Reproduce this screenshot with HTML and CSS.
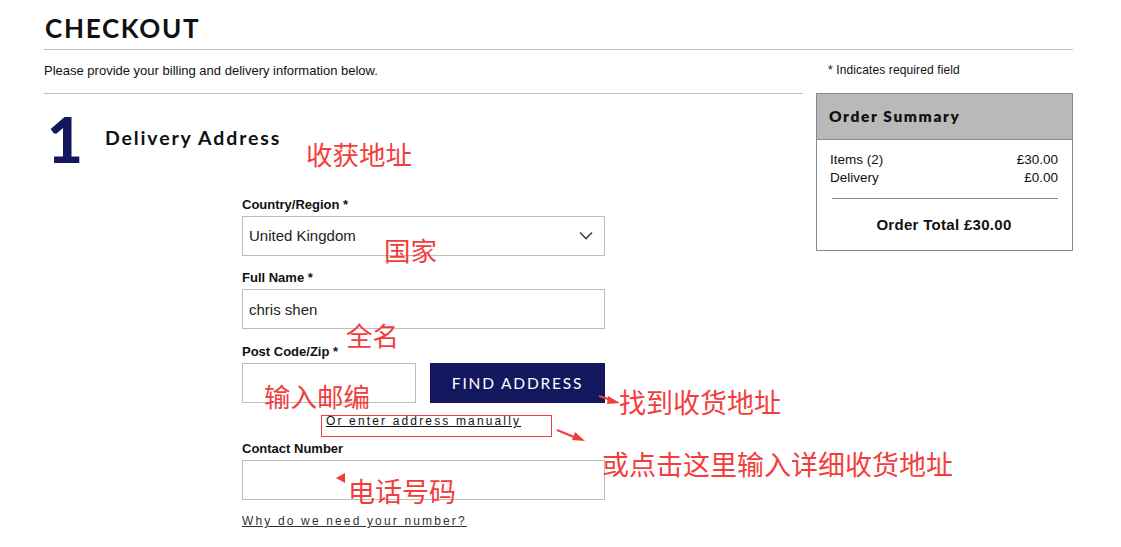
FILE: index.html
```html
<!DOCTYPE html>
<html lang="en">
<head>
<meta charset="utf-8">
<title>Checkout</title>
<link rel="stylesheet" href="styles.css">
</head>
<body>
<div class="page">
  <h1 class="page-title">CHECKOUT</h1>
  <div class="layout">
    <main class="main-col">
      <p class="intro">Please provide your billing and delivery information below.</p>
      <section class="step">
        <div class="step-head">
          <span class="step-num">1</span>
          <h2 class="step-title">Delivery Address</h2>
        </div>
        <form class="form">
          <div class="field">
            <label class="label">Country/Region *</label>
            <div class="select">
              <span>United Kingdom</span>
              <svg class="chev" width="14" height="9" viewBox="0 0 14 9"><path d="M1 1.5 L7 7.5 L13 1.5" fill="none" stroke="#444" stroke-width="1.6"/></svg>
            </div>
          </div>
          <div class="field field-name">
            <label class="label">Full Name *</label>
            <div class="input">chris shen</div>
          </div>
          <div class="field">
            <label class="label">Post Code/Zip *</label>
            <div class="post-row">
              <div class="input post"></div>
              <button type="button" class="btn">FIND ADDRESS</button>
            </div>
          </div>
          <div class="manual-row"><a class="link" href="#">Or enter address manually</a></div>
          <div class="field field-tight">
            <label class="label">Contact Number</label>
            <div class="input"></div>
          </div>
          <div class="why-row"><a class="link why" href="#">Why do we need your number?</a></div>
        </form>
      </section>
    </main>
    <aside class="side-col">
      <p class="required">* Indicates required field</p>
      <div class="summary">
        <div class="summary-head">Order Summary</div>
        <div class="summary-body">
          <div class="summary-row"><span>Items (2)</span><span>£30.00</span></div>
          <div class="summary-row"><span>Delivery</span><span>£0.00</span></div>
          <hr class="summary-rule">
          <div class="summary-total">Order Total £30.00</div>
        </div>
      </div>
    </aside>
  </div>

  <div class="note n-addr">收获地址</div>
  <div class="note n-country">国家</div>
  <div class="note n-name">全名</div>
  <div class="note n-post">输入邮编</div>
  <div class="note n-find">找到收货地址</div>
  <div class="note n-manual">或点击这里输入详细收货地址</div>
  <div class="note n-phone">电话号码</div>
  <div class="note-box"></div>
  <svg class="arrows" width="1121" height="547" viewBox="0 0 1121 547">
    <path d="M599 396 L611 400" stroke="#f33d3d" stroke-width="2.2" fill="none"/>
    <path d="M620 403 L608 396 L607 404 Z" fill="#f33d3d"/>
    <path d="M557 430 L574 437" stroke="#f33d3d" stroke-width="2.2" fill="none"/>
    <path d="M585 441 L575 432 L572 440 Z" fill="#f33d3d"/>
    <path d="M336 478 L345 473 L345 483 Z" fill="#f33d3d"/>
  </svg>
</div>
</body>
</html>
```

FILE: styles.css
```css
* { box-sizing: border-box; }
html, body { margin: 0; padding: 0; background: #fff; }
body {
  font-family: "Liberation Sans", Arial, sans-serif;
  color: #111;
  width: 1121px;
  height: 547px;
  overflow: hidden;
}
.page {
  position: relative;
  width: 1121px;
  height: 547px;
  padding-left: 44px;
}
.page-title {
  margin: 0;
  width: 1029px;
  padding-top: 13px;
  height: 50px;
  font-family: Lato, sans-serif;
  font-weight: 700;
  font-size: 26px;
  line-height: 30px;
  letter-spacing: 1.7px;
  color: #111;
  border-bottom: 1px solid #bdbdbd;
  padding-left: 1px;
}
.layout {
  display: flex;
  gap: 13px;
  width: 1029px;
}
.main-col { width: 759px; }
.intro {
  margin: 0;
  padding: 13px 0 14px;
  font-size: 13px;
  line-height: 16px;
  border-bottom: 1px solid #bdbdbd;
}
.step-head {
  display: flex;
  padding-top: 14px;
  height: 102px;
  align-items: flex-start;
}
.step-num {
  font-family: Lato, sans-serif;
  font-weight: 900;
  font-size: 62px;
  line-height: 62px;
  color: #12175e;
  width: 61px;
  padding-left: 3px;
}
.step-title {
  margin: 18px 0 0;
  font-family: Lato, sans-serif;
  font-weight: 700;
  font-size: 19.5px;
  line-height: 24px;
  letter-spacing: 1.85px;
  color: #111;
}
.form {
  margin-left: 198px;
  width: 363px;
  display: flex;
  flex-direction: column;
}
.field { display: flex; flex-direction: column; margin-bottom: 13px; }
.field-name { margin-bottom: 14px; }
.field-tight { margin-bottom: 0; }
.label {
  font-size: 13px;
  font-weight: 700;
  line-height: 16px;
  margin-top: 1px;
  margin-bottom: 3px;
  color: #111;
}
.select, .input {
  height: 40px;
  border: 1px solid #bdbdbd;
  display: flex;
  align-items: center;
  padding: 0 6px;
  font-size: 15px;
  color: #222;
}
.select { justify-content: space-between; padding-right: 11px; padding-bottom: 1px; }
.chev { display: block; }
.post-row { display: flex; justify-content: space-between; }
.input.post { width: 174px; }
.btn {
  width: 175px;
  height: 40px;
  border: 0;
  background: #12175e;
  color: #fff;
  font-family: Lato, sans-serif;
  font-size: 15.5px;
  font-weight: 400;
  letter-spacing: 1.8px;
  padding: 0 0 1px;
}
.manual-row {
  margin-top: -3px;
  height: 27px;
  padding-left: 84px;
  line-height: 14px;
}
.link {
  font-size: 12px;
  letter-spacing: 2.15px;
  color: #111;
  text-decoration: underline;
}
.why-row { margin-top: 13px; line-height: 14px; }
.why { color: #333; letter-spacing: 2.15px; }
.side-col { width: 257px; }
.required {
  margin: 0;
  padding-top: 12px;
  height: 43px;
  font-size: 12px;
  line-height: 16px;
  letter-spacing: 0.12px;
  padding-left: 12px;
}
.summary { border: 1px solid #8a8a8a; }
.summary-head {
  height: 46px;
  background: #b9b9b9;
  border-bottom: 1px solid #8a8a8a;
  padding-left: 12px;
  padding-bottom: 2px;
  display: flex;
  align-items: center;
  font-family: Lato, sans-serif;
  font-weight: 800;
  font-size: 15.5px;
  letter-spacing: 1.6px;
  color: #111;
}
.summary-body { padding: 11px 14px 15px 13px; }
.summary-row {
  display: flex;
  justify-content: space-between;
  font-size: 13.5px;
  line-height: 18px;
}
.summary-rule {
  margin: 11px 0 0 2px;
  border: 0;
  border-top: 1px solid #8a8a8a;
}
.summary-total {
  margin-top: 16px;
  text-align: center;
  font-weight: 700;
  font-size: 15px;
  letter-spacing: 0.3px;
  line-height: 20px;
}
.note {
  position: absolute;
  font-family: "Noto Sans CJK SC", sans-serif;
  font-size: 26.5px;
  line-height: 30px;
  color: #f33d3d;
  white-space: nowrap;
}
.n-addr { left: 306px; top: 139px; }
.n-country { left: 384px; top: 235px; }
.n-name { left: 346px; top: 320px; }
.n-post { left: 264px; top: 381px; }
.n-find { left: 619px; top: 387px; font-size: 27px; }
.n-manual { left: 602px; top: 449px; font-size: 27px; }
.n-phone { left: 348px; top: 476px; font-size: 27px; }
.note-box {
  position: absolute;
  left: 321px;
  top: 415px;
  width: 231px;
  height: 22px;
  border: 1px solid #f33d3d;
}
.arrows { position: absolute; left: 0; top: 0; pointer-events: none; }
```
